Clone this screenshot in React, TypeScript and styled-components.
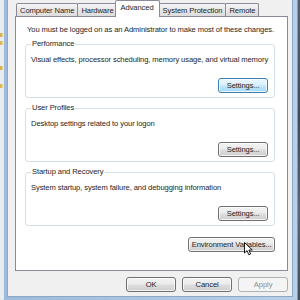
import React from "react";
import styled, { createGlobalStyle, css } from "styled-components";

const Global = createGlobalStyle`
  html, body { margin: 0; padding: 0; background: #ffffff; }
  body { font-family: "Liberation Sans", Arial, sans-serif; }
`;

const Screen = styled.div`
  position: relative;
  width: 300px;
  height: 300px;
  display: flex;
  overflow: hidden;
  font-family: "Liberation Sans", Arial, sans-serif;
  font-size: 7.6px;
  letter-spacing: -0.1px;
  color: #1e1e1e;
`;

const DesktopLeft = styled.div`
  width: 3px;
  flex: none;
  background: #e8ecf0;
`;

const DesktopRight = styled.div`
  width: 3px;
  flex: none;
  background: linear-gradient(#56616d, #3f4a56 40%, #5a6673 70%, #444e59);
`;

const Frame = styled.div`
  flex: 1;
  display: flex;
  padding: 0 6px 4px 5px;
  background: linear-gradient(90deg, #9dbbdb, #b8d0ea);
  box-shadow: inset 1px 0 0 #dbe8f5, inset -1px 0 0 #7d9bbb;
`;

const DialogBody = styled.div`
  flex: 1;
  display: flex;
  flex-direction: column;
  background: #f0f0f0;
  padding: 0 4px 0 7px;
  box-shadow: 0 0 0 1px #8ea7c2;
`;

const TabStrip = styled.div`
  display: flex;
  align-items: flex-end;
  height: 17px;
  padding-left: 1px;
`;

const Tab = styled.div<{ $active?: boolean }>`
  height: 14px;
  padding: 1px 3px 0 3px;
  display: flex;
  align-items: center;
  box-sizing: border-box;
  border: 1px solid #898c95;
  border-bottom: none;
  border-radius: 2px 2px 0 0;
  margin-right: -1px;
  background: linear-gradient(#f5f5f5, #e6e6e6 50%, #dcdcdc);
  white-space: nowrap;
  line-height: 10px;
  ${(p) =>
    p.$active &&
    css`
      position: relative;
      z-index: 1;
      height: 17px;
      margin: 0 -1px 0 -2px;
      padding: 0 5px 2px;
      background: #ffffff;
    `}
`;

const Panel = styled.div`
  height: 255px;
  box-sizing: border-box;
  margin-top: -1px;
  background: #ffffff;
  border: 1px solid #898c95;
  padding: 8px 12px 0 9px;
  display: flex;
  flex-direction: column;
`;

const Notice = styled.div`
  line-height: 10px;
  padding-left: 2px;
  white-space: nowrap;
  margin-bottom: 9px;
`;

const Groups = styled.div`
  display: flex;
  flex-direction: column;
  gap: 10px;
`;

const GroupBox = styled.div`
  position: relative;
  height: 54px;
  box-sizing: border-box;
  border: 1px solid #d5dfe5;
  border-radius: 3px;
  padding: 10px 6px 4px 5px;
  display: flex;
  flex-direction: column;
`;

const Legend = styled.span`
  position: absolute;
  top: -6px;
  left: 5px;
  padding: 0 1px;
  background: #ffffff;
  line-height: 10px;
  white-space: nowrap;
`;

const GroupText = styled.div`
  line-height: 10px;
  white-space: nowrap;
`;

const Button = styled.button<{ $w: number; $state?: "focused" | "disabled" }>`
  width: ${(p) => p.$w}px;
  height: 15px;
  flex: none;
  padding: 0;
  box-sizing: border-box;
  font: inherit;
  letter-spacing: inherit;
  line-height: 12px;
  color: #1e1e1e;
  border: 1px solid #707070;
  border-radius: 3px;
  background: linear-gradient(#f2f2f2, #ebebeb 48%, #dddddd 52%, #cfcfcf);
  box-shadow: inset 0 0 0 1px rgba(255, 255, 255, 0.75);
  ${(p) =>
    p.$state === "focused" &&
    css`
      border-color: #3c7fb1;
      background: linear-gradient(#eaf6fd, #d9f0fc 48%, #bee6fd 52%, #a7d9f5);
    `}
  ${(p) =>
    p.$state === "disabled" &&
    css`
      border-color: #adb2b5;
      background: #f4f4f4;
      color: #8e8f8f;
      box-shadow: none;
    `}
`;

const GroupButton = styled(Button)`
  align-self: flex-end;
  margin-top: auto;
`;

const EnvButton = styled(Button)`
  align-self: flex-end;
  margin-top: 11px;
`;

const ButtonRow = styled.div`
  display: flex;
  justify-content: flex-end;
  gap: 6px;
  padding-top: 6px;
`;

const Cursor = styled.svg`
  position: absolute;
  left: 244px;
  top: 242px;
  z-index: 5;
`;

const DesktopIcons = () => (
  <svg width="3" height="300" viewBox="0 0 3 300">
    <rect x="0" y="33" width="2.5" height="4" fill="#d9b24a" />
    <rect x="0" y="41" width="2.5" height="4" fill="#e0ba50" />
    <rect x="0" y="66" width="2.5" height="4" fill="#d9b24a" />
    <rect x="0" y="84" width="2.5" height="4" fill="#e0ba50" />
  </svg>
);

type Group = { title: string; text: string; focused?: boolean };

const groups: Group[] = [
  {
    title: "Performance",
    text: "Visual effects, processor scheduling, memory usage, and virtual memory",
    focused: true,
  },
  { title: "User Profiles", text: "Desktop settings related to your logon" },
  {
    title: "Startup and Recovery",
    text: "System startup, system failure, and debugging information",
  },
];

const tabs = ["Computer Name", "Hardware", "Advanced", "System Protection", "Remote"];

export default function App() {
  return (
    <>
      <Global />
      <Screen>
        <DesktopLeft>
          <DesktopIcons />
        </DesktopLeft>
        <Frame>
          <DialogBody>
            <TabStrip>
              {tabs.map((t) => (
                <Tab key={t} $active={t === "Advanced"}>
                  {t}
                </Tab>
              ))}
            </TabStrip>
            <Panel>
              <Notice>
                You must be logged on as an Administrator to make most of these changes.
              </Notice>
              <Groups>
                {groups.map((g) => (
                  <GroupBox key={g.title}>
                    <Legend>{g.title}</Legend>
                    <GroupText>{g.text}</GroupText>
                    <GroupButton $w={50} $state={g.focused ? "focused" : undefined}>
                      Settings...
                    </GroupButton>
                  </GroupBox>
                ))}
              </Groups>
              <EnvButton $w={87}>Environment Variables...</EnvButton>
            </Panel>
            <ButtonRow>
              <Button $w={50}>OK</Button>
              <Button $w={50}>Cancel</Button>
              <Button $w={50} $state="disabled">
                Apply
              </Button>
            </ButtonRow>
          </DialogBody>
        </Frame>
        <DesktopRight />
        <Cursor width="10" height="14" viewBox="0 0 10 14">
          <path
            d="M0.5 0.5 L0.5 11 L3 8.6 L4.8 12.8 L6.6 12 L4.9 8 L8.3 8 Z"
            fill="#ffffff"
            stroke="#000000"
            strokeWidth="0.9"
            strokeLinejoin="round"
          />
        </Cursor>
      </Screen>
    </>
  );
}
